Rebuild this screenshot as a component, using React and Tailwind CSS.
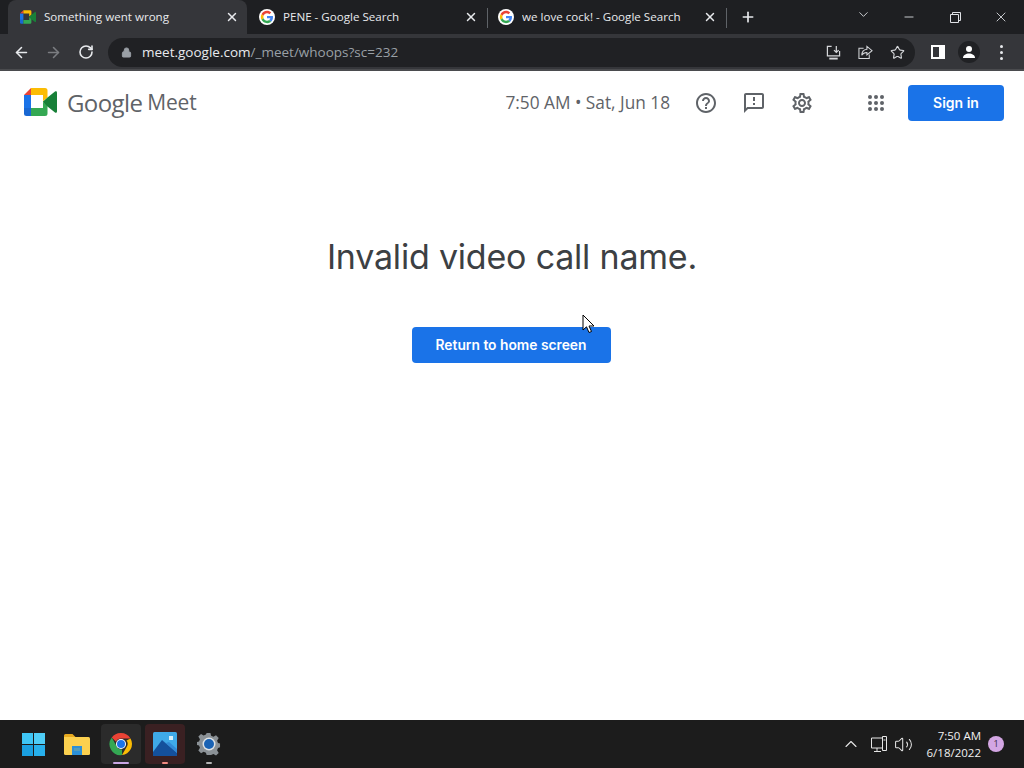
import React from 'react';
import { ArrowLeft, ArrowRight, RotateCw, Lock, Star, Plus, X, ChevronDown, ChevronUp, Minus, Volume2 } from 'lucide-react';

function GoogleG({ size = 16 }) {
  return (
    <svg width={size} height={size} viewBox="0 0 48 48" className="shrink-0">
      <circle cx="24" cy="24" r="24" fill="#fff" />
      <path fill="#EA4335" d="M24 13c3 0 5.400 1 7.300 2.800l5.400-5.400C33.400 7.400 29.100 5.500 24 5.500c-7.300 0-13.500 4.200-16.500 10.200l6.300 4.900C15.300 16.200 19.300 13 24 13z" />
      <path fill="#4285F4" d="M42 24.400c0-1.300-.1-2.500-.3-3.700H24v7h10.100c-.4 2.300-1.700 4.300-3.700 5.600l6.100 4.700c3.500-3.300 5.500-8 5.500-13.600z" />
      <path fill="#FBBC05" d="M13.800 27.400c-.4-1.100-.6-2.300-.6-3.400s.2-2.300.6-3.400l-6.300-4.900C6.200 18.200 5.500 21 5.500 24s.7 5.800 2 8.300l6.300-4.900z" />
      <path fill="#34A853" d="M24 42.500c5 0 9.200-1.600 12.500-4.500l-6.100-4.700c-1.700 1.100-3.800 1.800-6.400 1.800-4.700 0-8.700-3.200-10.200-7.600l-6.300 4.900c3 6 9.200 10.100 16.500 10.100z" />
    </svg>
  );
}

function MeetLogo({ className }) {
  return (
    <svg viewBox="0 0 33 28" className={className}>
      <path fill="#EA4335" d="M7 0 0 7h7z" />
      <path fill="#1A73E8" d="M0 7h7v13H0z" />
      <path fill="#1967D2" d="M0 20h7v8H2.500A2.500 2.500 0 0 1 0 25.500z" />
      <path fill="#FBBC04" d="M7 0h14a2.500 2.500 0 0 1 2.500 2.500V9.500L19 13V7H7z" />
      <path fill="#34A853" d="M7 20h12v-6l4.500 3.500v8a2.500 2.500 0 0 1-2.500 2.500H7z" />
      <path fill="#188038" d="M19 13.500 23.500 9.500 31 3.500c.8-.6 2-.1 2 1v19c0 1.100-1.200 1.600-2 1l-7.500-6-4.500-4.500z" />
    </svg>
  );
}

function Tab({ icon, title, active, divider }) {
  return (
    <div className={`relative flex h-[34px] w-[239px] items-center pl-[12px] pr-[8px] ${active ? 'rounded-t-lg bg-[#35363a]' : ''}`}>
      <div className="mr-[8px] flex w-4 shrink-0 justify-center">{icon}</div>
      <span className="flex-1 truncate text-[11.6px] text-[#e8eaed]">{title}</span>
      <X size={14} strokeWidth={2.5} className="text-[#e8eaed]" />
      {divider && <div className="absolute right-[-2px] top-2 h-[20px] w-px bg-[#5f6368]" />}
    </div>
  );
}

function MeetFavicon() {
  return <MeetLogo className="h-[14px] w-4" />;
}

function TabStrip() {
  return (
    <div className="flex h-[34px] items-center bg-[#1e1f22] pl-2 text-[#e8eaed]">
      <Tab active icon={<MeetFavicon />} title="Something went wrong" />
      <Tab icon={<GoogleG />} title="PENE - Google Search" divider />
      <Tab icon={<GoogleG />} title="we love cock! - Google Search" divider />
      <Plus size={16} strokeWidth={2.5} className="ml-[15px]" />
      <div className="ml-auto flex items-center text-[#dfe1e5]">
        <div className="flex h-[28px] w-[46px] items-start justify-center pt-1">
          <ChevronDown size={15} strokeWidth={1.4} />
        </div>
        <div className="flex h-[28px] w-[46px] items-start justify-center pt-[7px]">
          <Minus size={14} strokeWidth={1.5} />
        </div>
        <div className="flex h-[28px] w-[46px] items-start justify-center pt-[9px]">
          <svg width="11" height="11" viewBox="0 0 11 11" fill="none" stroke="currentColor">
            <path d="M.5 2.500h8v8h-8zM2.500 2.500v-2h8v8h-2" />
          </svg>
        </div>
        <div className="flex h-[28px] w-[46px] items-start justify-center pt-[6px]">
          <X size={16} strokeWidth={1.3} />
        </div>
      </div>
    </div>
  );
}

function Toolbar() {
  return (
    <div className="flex h-[37px] items-center border-b-[2px] border-[#4a4b4e] bg-[#35363a] pl-[13px] pt-[1px]">
      <ArrowLeft size={17} strokeWidth={2.2} className="text-[#e8eaed]" />
      <ArrowRight size={17} strokeWidth={2.2} className="ml-[15px] text-[#7b7d81]" />
      <RotateCw size={16} strokeWidth={2.4} className="ml-[16px] text-[#e8eaed]" />
      <div className="ml-[14px] flex h-[29px] w-[807px] items-center rounded-full bg-[#202124] pl-[13px] pr-[10px]">
        <Lock size={11} fill="#9aa0a6" className="text-[#9aa0a6]" />
        <span className="ml-[10px] text-[13.5px] text-[#e8eaed]">meet.google.com<span className="text-[#9aa0a6]">/_meet/whoops?sc=232</span></span>
        <div className="ml-auto flex items-center gap-[17px] text-[#d5d7da]">
          <svg width="15" height="15" viewBox="0 0 16 16" fill="none" stroke="currentColor" strokeWidth="1.300">
            <path d="M6 1.500H1.500v10h13v-5" />
            <path d="M11 1v7M8.500 5.500 11 8l2.500-2.500" />
            <path d="M3.500 14.500h9" strokeWidth="2" />
          </svg>
          <svg width="15" height="15" viewBox="0 0 16 16" fill="none" stroke="currentColor" strokeWidth="1.100">
            <path d="M6 3.500H1v11h11V10" />
            <path d="M9.500 1.500 15 6l-5.500 4.500V8C7 8 5 9 4 11c0-3.500 2-6 5.500-6.500z" />
          </svg>
          <Star size={15} strokeWidth={1.8} />
        </div>
      </div>
      <div className="ml-[16px] h-[14px] w-[14px] border-[2px] border-white bg-[linear-gradient(to_right,#35363a_60%,#ffffff_60%)]" />
      <div className="ml-[13px] flex h-[22px] w-[22px] items-center justify-center rounded-full bg-[#202124]">
        <svg width="14" height="14" viewBox="0 0 14 14" fill="#fff">
          <circle cx="7" cy="4" r="3" />
          <path d="M1 13c0-3 3-4.500 6-4.500s6 1.500 6 4.500z" />
        </svg>
      </div>
      <div className="ml-[20px] flex flex-col gap-[3px]">
        <div className="h-[3px] w-[3px] rounded-full bg-[#e8eaed]" />
        <div className="h-[3px] w-[3px] rounded-full bg-[#e8eaed]" />
        <div className="h-[3px] w-[3px] rounded-full bg-[#e8eaed]" />
      </div>
    </div>
  );
}

function MeetHeader() {
  const gray = '#5f6368';
  return (
    <div className="flex h-[64px] items-center pl-6 pr-5">
      <MeetLogo className="mb-[2px] h-[28px] w-[33px]" />
      <span className="ml-[10px] text-[24px] tracking-[-0.6px] text-[#5f6368]">Google</span>
      <span className="ml-[5px] text-[21px] tracking-[-0.2px] text-[#5f6368]">Meet</span>
      <span className="ml-auto text-[17.25px] text-[#5f6368]">7:50 AM • Sat, Jun 18</span>
      <svg width="24" height="24" viewBox="0 0 24 24" fill={gray} className="ml-[24px]">
        <path d="M11 18h2v-2h-2v2zm1-16C6.480 2 2 6.480 2 12s4.480 10 10 10 10-4.480 10-10S17.520 2 12 2zm0 18c-4.410 0-8-3.590-8-8s3.590-8 8-8 8 3.590 8 8-3.590 8-8 8zm0-14c-2.210 0-4 1.790-4 4h2c0-1.100.9-2 2-2s2 .9 2 2c0 2-3 1.750-3 5h2c0-2.250 3-2.500 3-5 0-2.210-1.790-4-4-4z" />
      </svg>
      <svg width="24" height="24" viewBox="0 0 24 24" fill={gray} className="ml-[24px]">
        <path d="M20 2H4c-1.100 0-2 .9-2 2v18l4-4h14c1.100 0 2-.9 2-2V4c0-1.100-.9-2-2-2zm0 14H5.170L4 17.170V4h16v12zM11 12h2v2h-2zm0-6h2v4h-2z" />
      </svg>
      <svg width="24" height="24" viewBox="0 0 24 24" fill={gray} className="ml-[24px]">
        <path d="M19.430 12.980c.04-.32.070-.64.070-.98s-.03-.66-.07-.98l2.110-1.650c.19-.15.240-.42.120-.64l-2-3.460c-.12-.22-.39-.3-.61-.22l-2.490 1c-.52-.4-1.080-.73-1.690-.98l-.38-2.650A.488.488 0 0 0 14 2h-4c-.25 0-.46.18-.49.42l-.38 2.650c-.61.25-1.170.59-1.690.98l-2.490-1c-.23-.09-.49 0-.61.22l-2 3.460c-.13.22-.07.49.12.64l2.110 1.650c-.04.32-.07.65-.07.98s.03.66.07.98l-2.110 1.650c-.19.15-.24.42-.12.64l2 3.460c.12.22.39.3.61.22l2.490-1c.52.4 1.080.73 1.690.98l.38 2.650c.03.24.24.42.49.42h4c.25 0 .46-.18.49-.42l.38-2.650c.61-.25 1.170-.59 1.690-.98l2.490 1c.23.09.49 0 .61-.22l2-3.460c.12-.22.07-.49-.12-.64l-2.110-1.650zm-1.980-1.710c.04.31.05.52.05.73s-.02.43-.05.73l-.14 1.130.89.7 1.080.84-.7 1.210-1.270-.51-1.040-.42-.9.68c-.43.32-.84.56-1.250.73l-1.060.43-.16 1.130-.2 1.350h-1.400l-.19-1.350-.16-1.130-1.060-.43c-.43-.18-.83-.41-1.230-.71l-.91-.7-1.060.43-1.270.51-.7-1.210 1.080-.84.89-.7-.14-1.130c-.03-.31-.05-.54-.05-.74s.02-.43.05-.73l.14-1.130-.89-.7-1.080-.84.7-1.210 1.270.51 1.040.42.9-.68c.43-.32.84-.56 1.250-.73l1.060-.43.16-1.130.2-1.350h1.390l.19 1.350.16 1.130 1.060.43c.43.18.83.41 1.230.71l.91.7 1.060-.43 1.270-.51.7 1.210-1.070.85-.89.7.14 1.130zM12 8c-2.210 0-4 1.790-4 4s1.790 4 4 4 4-1.790 4-4-1.790-4-4-4zm0 6c-1.100 0-2-.9-2-2s.9-2 2-2 2 .9 2 2-.9 2-2 2z" />
      </svg>
      <div className="ml-[54px] grid grid-cols-3 gap-[2px]">
        {Array.from({ length: 9 }).map((_, i) => (
          <div key={i} className="h-[4px] w-[4px] rounded-full bg-[#5f6368]" />
        ))}
      </div>
      <button className="ml-[24px] h-[36px] w-[96px] rounded bg-[#1a73e8] pb-[2px] font-['Inter',sans-serif] text-[14px] font-semibold text-white">Sign in</button>
    </div>
  );
}

function Cursor() {
  return (
    <svg width="14" height="20" viewBox="0 0 14 20" className="absolute left-[582px] top-[243px]">
      <path d="M1 1v15l3.500-3.200 2.500 5.700 2.500-1-2.500-5.500H12z" fill="#fff" stroke="#000" strokeWidth="1" />
    </svg>
  );
}

function WindowsLogo() {
  return (
    <div className="grid h-[23px] w-[23px] grid-cols-2 gap-[1px]">
      <div className="bg-[#3ec5f5]" />
      <div className="bg-[#4ecdf7]" />
      <div className="bg-[#1a9fe0]" />
      <div className="bg-[#27b0ec]" />
    </div>
  );
}

function FolderIcon() {
  return (
    <svg width="26" height="22" viewBox="0 0 26 22">
      <path fill="#e6a91f" d="M0 2.500A1.500 1.500 0 0 1 1.500 1h7l3 3H0z" />
      <path fill="#fbd04f" d="M0 4h24.500A1.500 1.500 0 0 1 26 5.500v15a1.500 1.500 0 0 1-1.500 1.500h-23A1.500 1.500 0 0 1 0 20.500z" />
      <path fill="#2b8fd6" d="M8 13h10v9H8z" />
      <path fill="#fbd04f" d="M10 15h6v3h-6z" opacity="0.2" />
    </svg>
  );
}

function ChromeIcon() {
  return (
    <svg width="24" height="24" viewBox="0 0 48 48">
      <path fill="#EA4335" d="M24 2a22 22 0 0 1 19 11H24a11 11 0 0 0-10 6.500L5.500 11A22 22 0 0 1 24 2z" />
      <path fill="#FBBC04" d="M43 13a22 22 0 0 1-17 33l9.500-16.500A11 11 0 0 0 35 17z" />
      <path fill="#34A853" d="M26 46A22 22 0 0 1 5.500 11L15 28a11 11 0 0 0 11 7z" />
      <circle cx="24" cy="24" r="10" fill="#fff" />
      <circle cx="24" cy="24" r="8" fill="#1a73e8" />
    </svg>
  );
}

function PhotosIcon() {
  return (
    <svg width="24" height="24" viewBox="0 0 24 24">
      <rect width="24" height="24" rx="1.500" fill="#3fa9e8" />
      <path fill="#14509c" d="M0 20 9 8l15 13v3H0z" />
      <path fill="#2a75c9" d="M9 8l15 13v-4l-8-7-3 1z" opacity="0.6" />
      <rect x="16" y="4" width="4" height="4" fill="#d8f0fb" />
    </svg>
  );
}

function SettingsIcon() {
  return (
    <svg width="24" height="24" viewBox="0 0 24 24">
      <path fill="#8b9196" d="M10 1h4l.7 3 2.400 1 2.700-1.600 2.800 2.800L20.900 9l1 2.400 2.100.6v4l-2.100.6-1 2.400 1.700 2.800-2.800 2.800-2.700-1.600-2.400 1L14 24h-4l-.7-2.500-2.400-1-2.700 1.600-2.800-2.800L3.100 16.500l-1-2.400L0 13.500v-3l2.100-.6 1-2.400L1.400 4.700 4.200 2 6.900 3.600 9.300 2.600z" transform="scale(0.96)" />
      <circle cx="12" cy="12" r="6.500" fill="#dfe3e6" />
      <circle cx="12" cy="12" r="5" fill="#1a62b4" />
    </svg>
  );
}

function TaskItem({ children, highlight, indicator }) {
  return (
    <div className={`relative flex h-[40px] w-[40px] items-center justify-center rounded ${highlight}`}>
      {children}
      {indicator && <div className={`absolute bottom-0 left-1/2 h-[2px] -translate-x-1/2 rounded-full ${indicator}`} />}
    </div>
  );
}

function Taskbar() {
  return (
    <div className="flex h-[48px] items-center bg-[#1c1c1c] pl-[13px] pr-[20px]">
      <TaskItem highlight=""><WindowsLogo /></TaskItem>
      <TaskItem highlight="ml-[4px]"><FolderIcon /></TaskItem>
      <TaskItem highlight="ml-[4px] bg-[#2b2b2b]" indicator="w-[16px] bg-[#c9a6e4]"><ChromeIcon /></TaskItem>
      <TaskItem highlight="ml-[4px] bg-[#3a2022]" indicator="w-[6px] bg-[#f28b82]"><PhotosIcon /></TaskItem>
      <TaskItem highlight="ml-[4px]" indicator="w-[6px] bg-[#b5b5b5]"><SettingsIcon /></TaskItem>
      <div className="ml-auto flex items-center text-[#e6e6e6]">
        <ChevronUp size={20} strokeWidth={1.3} />
        <svg width="18" height="18" viewBox="0 0 18 18" fill="none" stroke="currentColor" className="ml-[9px]">
          <path d="M12 3H1.500v10h11M7 13v3M4 16.500h7" />
          <path d="M12.500 1.500h4v14h-4zM13.500 5h2" />
        </svg>
        <Volume2 size={19} strokeWidth={1.3} className="ml-[6px]" />
        <div className="ml-[14px] flex flex-col items-end text-[11.5px] leading-[17px] text-[#f0f0f0]">
          <span>7:50 AM</span>
          <span>6/18/2022</span>
        </div>
        <div className="ml-[7px] flex h-[16px] w-[16px] items-center justify-center rounded-full bg-[#d3a6e3] text-[9px] text-[#3a2a44]">1</div>
      </div>
    </div>
  );
}

export default function App() {
  return (
    <div className="flex h-[768px] w-[1024px] flex-col overflow-hidden bg-white font-['Open_Sans',sans-serif]">
      <TabStrip />
      <Toolbar />
      <main className="relative flex flex-1 flex-col">
        <MeetHeader />
        <div className="flex flex-col items-center">
          <h1 className="mt-[100px] font-['Inter',sans-serif] text-[34px] font-normal leading-[44px] tracking-[-0.2px] text-[#3c4043]">Invalid video call name.</h1>
          <button className="mt-[48px] mr-[2px] h-[36px] w-[199px] rounded bg-[#1a73e8] font-['Inter',sans-serif] text-[13.8px] font-semibold text-white">Return to home screen</button>
        </div>
        <Cursor />
      </main>
      <Taskbar />
    </div>
  );
}
